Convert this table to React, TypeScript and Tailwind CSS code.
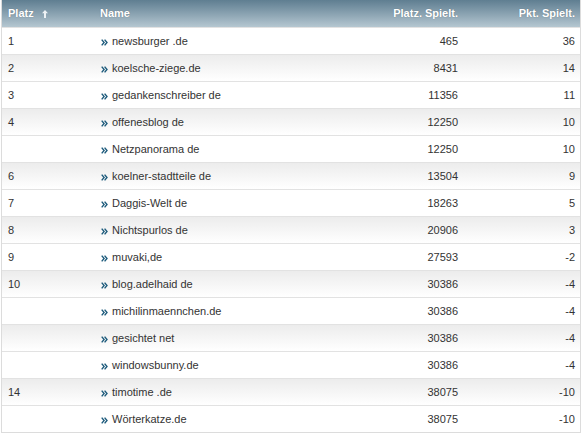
import React from "react";

const rows: [string, string, string, string][] = [
  ["1", "newsburger .de", "465", "36"],
  ["2", "koelsche-ziege.de", "8431", "14"],
  ["3", "gedankenschreiber de", "11356", "11"],
  ["4", "offenesblog de", "12250", "10"],
  ["", "Netzpanorama de", "12250", "10"],
  ["6", "koelner-stadtteile de", "13504", "9"],
  ["7", "Daggis-Welt de", "18263", "5"],
  ["8", "Nichtspurlos de", "20906", "3"],
  ["9", "muvaki,de", "27593", "-2"],
  ["10", "blog.adelhaid de", "30386", "-4"],
  ["", "michilinmaennchen.de", "30386", "-4"],
  ["", "gesichtet net", "30386", "-4"],
  ["", "windowsbunny.de", "30386", "-4"],
  ["14", "timotime .de", "38075", "-10"],
  ["", "Wörterkatze.de", "38075", "-10"],
];

function Chevrons() {
  return (
    <svg width="7" height="7" viewBox="0 0 7 7" className="shrink-0 mt-[3px]">
      <path d="M0.7 0.6 L3.1 3.5 L0.7 6.4" fill="none" stroke="#1d5b7c" strokeWidth="1.4" />
      <path d="M3.6 0.6 L6 3.5 L3.6 6.4" fill="none" stroke="#1d5b7c" strokeWidth="1.4" />
    </svg>
  );
}

export default function App() {
  return (
    <div
      className="w-[583px] h-[436px] bg-white"
      style={{ fontFamily: '"Liberation Sans", Arial, sans-serif' }}
    >
      <div className="ml-[1px] w-[580px] border-l border-r border-b border-[#dcdcdc]">
        <div className="flex h-[27px] items-center bg-gradient-to-b from-[#5f7e91] to-[#b5c7d1] text-[11px] font-bold text-white [text-shadow:0_0_1px_rgba(0,0,0,0.3)]">
          <div className="w-[98px] pl-[6px] flex items-center gap-[8px]">
            <span>Platz</span>
            <svg width="6" height="8" viewBox="0 0 6 8">
              <path d="M3 0 L6 3.2 L4 3.2 L4 8 L2 8 L2 3.2 L0 3.2 Z" fill="#eef2f5" />
            </svg>
          </div>
          <div className="w-[220px]">Name</div>
          <div className="w-[138px] text-right">Platz. Spielt.</div>
          <div className="flex-1 text-right pr-[5px]">Pkt. Spielt.</div>
        </div>
        {rows.map((r, i) => (
          <div
            key={i}
            className={
              "flex h-[27px] items-center text-[11px] text-[#333] border-t border-[#e2e2e2] " +
              (i % 2 === 1 ? "bg-gradient-to-b from-[#ececec] to-white" : "bg-white")
            }
          >
            <div className="w-[98px] pl-[6px]">{r[0]}</div>
            <div className="w-[220px] flex items-center gap-[4px] pl-[1px]">
              <Chevrons />
              <span>{r[1]}</span>
            </div>
            <div className="w-[138px] text-right">{r[2]}</div>
            <div className="flex-1 text-right pr-[5px]">{r[3]}</div>
          </div>
        ))}
      </div>
    </div>
  );
}
